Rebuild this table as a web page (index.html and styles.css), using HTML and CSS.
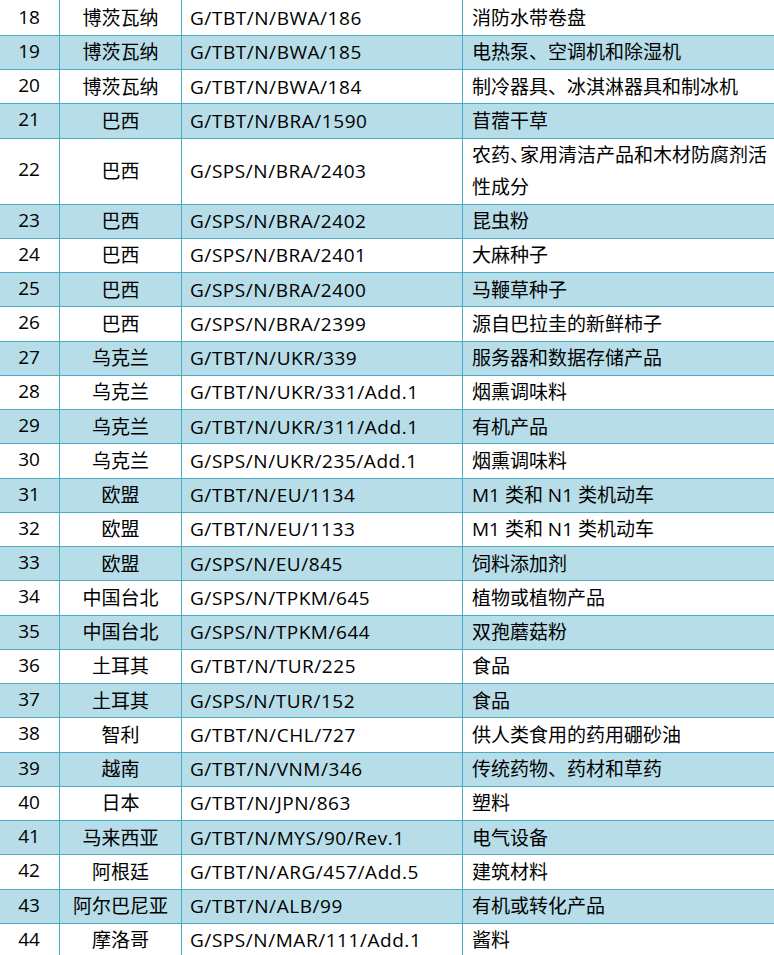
FILE: index.html
```html
<!DOCTYPE html>
<html lang="zh-CN">
<head>
<meta charset="utf-8">
<title>通报列表</title>
<link rel="stylesheet" href="styles.css">
</head>
<body>
<table class="notice-table">
  <colgroup>
    <col class="col-no">
    <col class="col-member">
    <col class="col-code">
    <col class="col-product">
  </colgroup>
  <tbody>
    <tr><td class="no">18</td><td class="member">博茨瓦纳</td><td class="code">G/TBT/N/BWA/186</td><td class="product">消防水带卷盘</td></tr>
    <tr class="band"><td class="no">19</td><td class="member">博茨瓦纳</td><td class="code">G/TBT/N/BWA/185</td><td class="product">电热泵、空调机和除湿机</td></tr>
    <tr><td class="no">20</td><td class="member">博茨瓦纳</td><td class="code">G/TBT/N/BWA/184</td><td class="product">制冷器具、冰淇淋器具和制冰机</td></tr>
    <tr class="band"><td class="no">21</td><td class="member">巴西</td><td class="code">G/TBT/N/BRA/1590</td><td class="product">苜蓿干草</td></tr>
    <tr><td class="no">22</td><td class="member">巴西</td><td class="code">G/SPS/N/BRA/2403</td><td class="product">农药<span class="tight">、</span>家用清洁产品和木材防腐剂活性成分</td></tr>
    <tr class="band"><td class="no">23</td><td class="member">巴西</td><td class="code">G/SPS/N/BRA/2402</td><td class="product">昆虫粉</td></tr>
    <tr><td class="no">24</td><td class="member">巴西</td><td class="code">G/SPS/N/BRA/2401</td><td class="product">大麻种子</td></tr>
    <tr class="band"><td class="no">25</td><td class="member">巴西</td><td class="code">G/SPS/N/BRA/2400</td><td class="product">马鞭草种子</td></tr>
    <tr><td class="no">26</td><td class="member">巴西</td><td class="code">G/SPS/N/BRA/2399</td><td class="product">源自巴拉圭的新鲜柿子</td></tr>
    <tr class="band"><td class="no">27</td><td class="member">乌克兰</td><td class="code">G/TBT/N/UKR/339</td><td class="product">服务器和数据存储产品</td></tr>
    <tr><td class="no">28</td><td class="member">乌克兰</td><td class="code">G/TBT/N/UKR/331/Add.1</td><td class="product">烟熏调味料</td></tr>
    <tr class="band"><td class="no">29</td><td class="member">乌克兰</td><td class="code">G/TBT/N/UKR/311/Add.1</td><td class="product">有机产品</td></tr>
    <tr><td class="no">30</td><td class="member">乌克兰</td><td class="code">G/SPS/N/UKR/235/Add.1</td><td class="product">烟熏调味料</td></tr>
    <tr class="band"><td class="no">31</td><td class="member">欧盟</td><td class="code">G/TBT/N/EU/1134</td><td class="product">M1 类和 N1 类机动车</td></tr>
    <tr><td class="no">32</td><td class="member">欧盟</td><td class="code">G/TBT/N/EU/1133</td><td class="product">M1 类和 N1 类机动车</td></tr>
    <tr class="band"><td class="no">33</td><td class="member">欧盟</td><td class="code">G/SPS/N/EU/845</td><td class="product">饲料添加剂</td></tr>
    <tr><td class="no">34</td><td class="member">中国台北</td><td class="code">G/SPS/N/TPKM/645</td><td class="product">植物或植物产品</td></tr>
    <tr class="band"><td class="no">35</td><td class="member">中国台北</td><td class="code">G/SPS/N/TPKM/644</td><td class="product">双孢蘑菇粉</td></tr>
    <tr><td class="no">36</td><td class="member">土耳其</td><td class="code">G/TBT/N/TUR/225</td><td class="product">食品</td></tr>
    <tr class="band"><td class="no">37</td><td class="member">土耳其</td><td class="code">G/SPS/N/TUR/152</td><td class="product">食品</td></tr>
    <tr><td class="no">38</td><td class="member">智利</td><td class="code">G/TBT/N/CHL/727</td><td class="product">供人类食用的药用硼砂油</td></tr>
    <tr class="band"><td class="no">39</td><td class="member">越南</td><td class="code">G/TBT/N/VNM/346</td><td class="product">传统药物、药材和草药</td></tr>
    <tr><td class="no">40</td><td class="member">日本</td><td class="code">G/TBT/N/JPN/863</td><td class="product">塑料</td></tr>
    <tr class="band"><td class="no">41</td><td class="member">马来西亚</td><td class="code">G/TBT/N/MYS/90/Rev.1</td><td class="product">电气设备</td></tr>
    <tr><td class="no">42</td><td class="member">阿根廷</td><td class="code">G/TBT/N/ARG/457/Add.5</td><td class="product">建筑材料</td></tr>
    <tr class="band"><td class="no">43</td><td class="member">阿尔巴尼亚</td><td class="code">G/TBT/N/ALB/99</td><td class="product">有机或转化产品</td></tr>
    <tr><td class="no">44</td><td class="member">摩洛哥</td><td class="code">G/SPS/N/MAR/111/Add.1</td><td class="product">酱料</td></tr>
  </tbody>
</table>
</body>
</html>
```

FILE: styles.css
```css
html, body {
  margin: 0;
  padding: 0;
  background: #ffffff;
  overflow: hidden;
}

body {
  font-family: "Open Sans", "Noto Sans CJK SC", sans-serif;
  font-size: 19px;
  color: #000000;
}

.notice-table {
  border-collapse: collapse;
  table-layout: fixed;
  width: 792px;
  margin: -1px 0 0 -2px;
}

.notice-table tbody {
  border-top: 1px solid transparent;
}

.col-no { width: 61px; }
.col-member { width: 122px; }
.col-code { width: 281px; }
.col-product { width: 328px; }

.notice-table td {
  border: 1px solid #4bacc6;
  padding: 1.5px 9px 0;
  line-height: 31.75px;
  vertical-align: middle;
  white-space: normal;
}

.notice-table tr:first-child td {
  border-top: 0;
  padding-top: 3px;
}

.notice-table tr:first-child td.no {
  padding-top: 1.5px;
}

.notice-table tr.band td {
  background: #b7dde8;
}

.notice-table td.no {
  text-align: center;
  padding: 0 4px 1.5px;
}

.notice-table td.member {
  text-align: center;
  padding-left: 2px;
  padding-right: 2px;
}

.notice-table td.code {
  padding-left: 8px;
  letter-spacing: 0.55px;
}

.tight {
  letter-spacing: -9px;
}
```
